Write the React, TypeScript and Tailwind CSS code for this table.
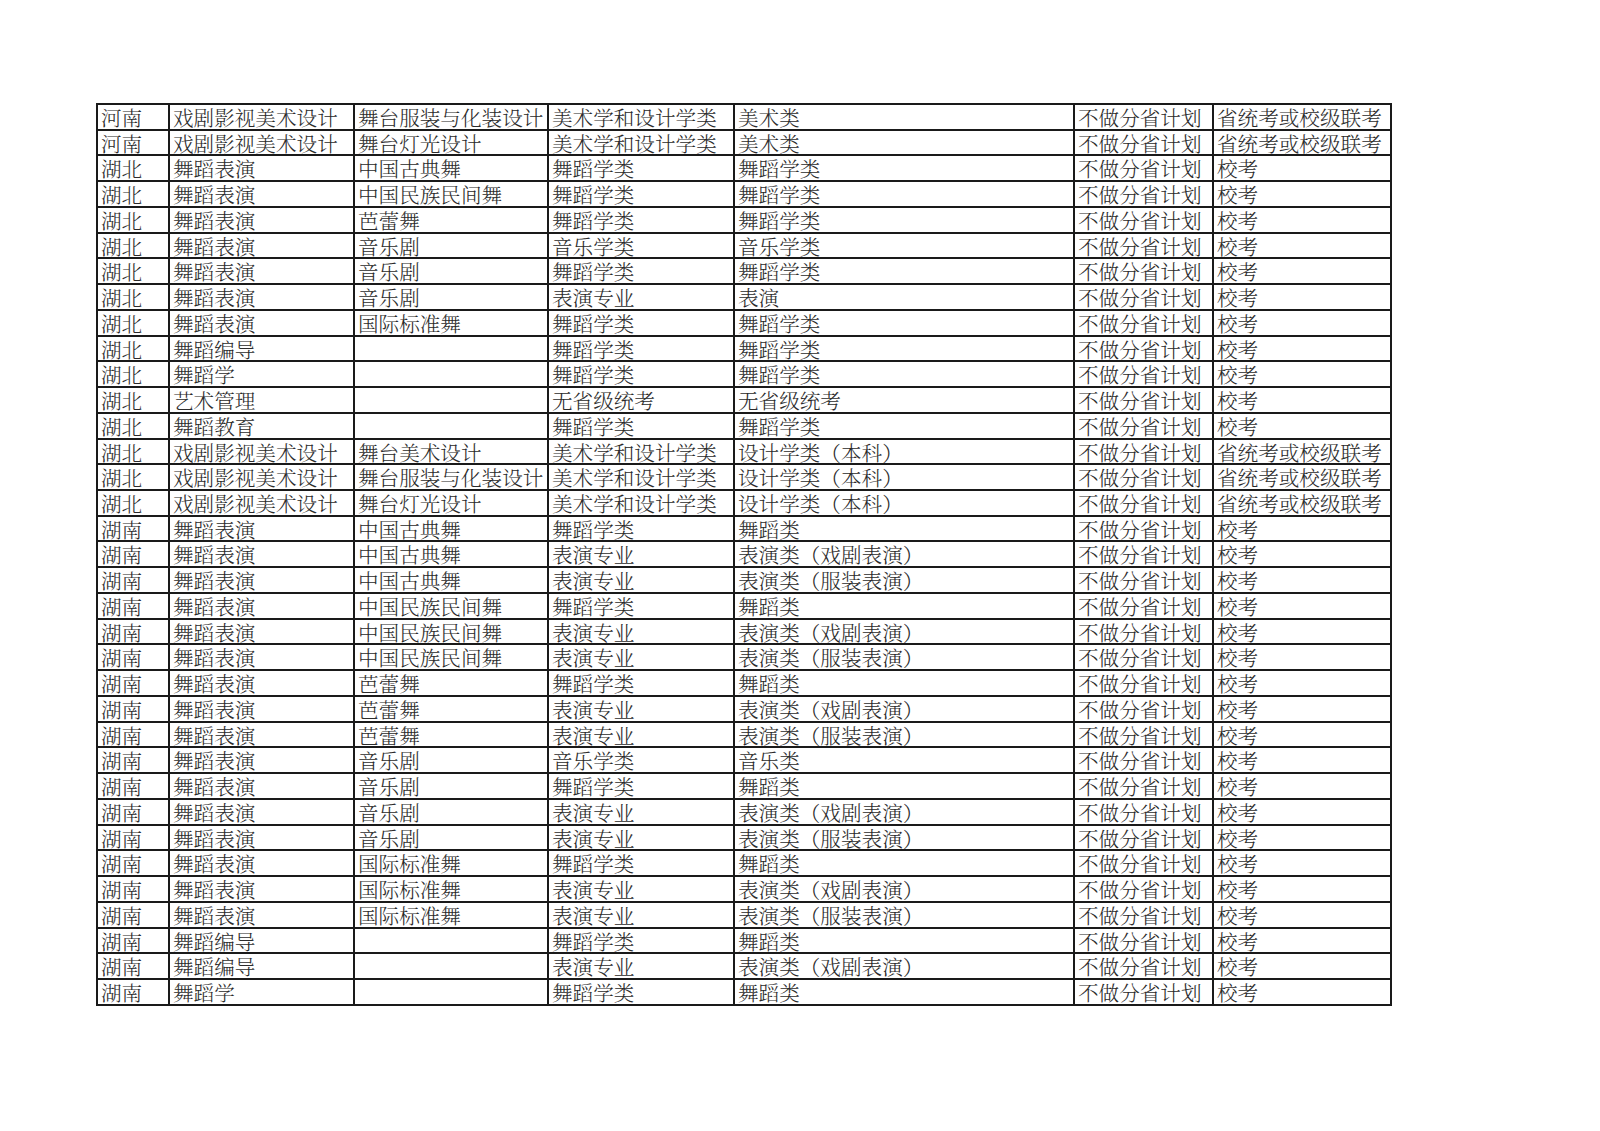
import React from "react";

const P = "不做分省计划";
const rows: string[][] = [
  ["河南", "戏剧影视美术设计", "舞台服装与化装设计", "美术学和设计学类", "美术类", P, "省统考或校级联考"],
  ["河南", "戏剧影视美术设计", "舞台灯光设计", "美术学和设计学类", "美术类", P, "省统考或校级联考"],
  ["湖北", "舞蹈表演", "中国古典舞", "舞蹈学类", "舞蹈学类", P, "校考"],
  ["湖北", "舞蹈表演", "中国民族民间舞", "舞蹈学类", "舞蹈学类", P, "校考"],
  ["湖北", "舞蹈表演", "芭蕾舞", "舞蹈学类", "舞蹈学类", P, "校考"],
  ["湖北", "舞蹈表演", "音乐剧", "音乐学类", "音乐学类", P, "校考"],
  ["湖北", "舞蹈表演", "音乐剧", "舞蹈学类", "舞蹈学类", P, "校考"],
  ["湖北", "舞蹈表演", "音乐剧", "表演专业", "表演", P, "校考"],
  ["湖北", "舞蹈表演", "国际标准舞", "舞蹈学类", "舞蹈学类", P, "校考"],
  ["湖北", "舞蹈编导", "", "舞蹈学类", "舞蹈学类", P, "校考"],
  ["湖北", "舞蹈学", "", "舞蹈学类", "舞蹈学类", P, "校考"],
  ["湖北", "艺术管理", "", "无省级统考", "无省级统考", P, "校考"],
  ["湖北", "舞蹈教育", "", "舞蹈学类", "舞蹈学类", P, "校考"],
  ["湖北", "戏剧影视美术设计", "舞台美术设计", "美术学和设计学类", "设计学类（本科）", P, "省统考或校级联考"],
  ["湖北", "戏剧影视美术设计", "舞台服装与化装设计", "美术学和设计学类", "设计学类（本科）", P, "省统考或校级联考"],
  ["湖北", "戏剧影视美术设计", "舞台灯光设计", "美术学和设计学类", "设计学类（本科）", P, "省统考或校级联考"],
  ["湖南", "舞蹈表演", "中国古典舞", "舞蹈学类", "舞蹈类", P, "校考"],
  ["湖南", "舞蹈表演", "中国古典舞", "表演专业", "表演类（戏剧表演）", P, "校考"],
  ["湖南", "舞蹈表演", "中国古典舞", "表演专业", "表演类（服装表演）", P, "校考"],
  ["湖南", "舞蹈表演", "中国民族民间舞", "舞蹈学类", "舞蹈类", P, "校考"],
  ["湖南", "舞蹈表演", "中国民族民间舞", "表演专业", "表演类（戏剧表演）", P, "校考"],
  ["湖南", "舞蹈表演", "中国民族民间舞", "表演专业", "表演类（服装表演）", P, "校考"],
  ["湖南", "舞蹈表演", "芭蕾舞", "舞蹈学类", "舞蹈类", P, "校考"],
  ["湖南", "舞蹈表演", "芭蕾舞", "表演专业", "表演类（戏剧表演）", P, "校考"],
  ["湖南", "舞蹈表演", "芭蕾舞", "表演专业", "表演类（服装表演）", P, "校考"],
  ["湖南", "舞蹈表演", "音乐剧", "音乐学类", "音乐类", P, "校考"],
  ["湖南", "舞蹈表演", "音乐剧", "舞蹈学类", "舞蹈类", P, "校考"],
  ["湖南", "舞蹈表演", "音乐剧", "表演专业", "表演类（戏剧表演）", P, "校考"],
  ["湖南", "舞蹈表演", "音乐剧", "表演专业", "表演类（服装表演）", P, "校考"],
  ["湖南", "舞蹈表演", "国际标准舞", "舞蹈学类", "舞蹈类", P, "校考"],
  ["湖南", "舞蹈表演", "国际标准舞", "表演专业", "表演类（戏剧表演）", P, "校考"],
  ["湖南", "舞蹈表演", "国际标准舞", "表演专业", "表演类（服装表演）", P, "校考"],
  ["湖南", "舞蹈编导", "", "舞蹈学类", "舞蹈类", P, "校考"],
  ["湖南", "舞蹈编导", "", "表演专业", "表演类（戏剧表演）", P, "校考"],
  ["湖南", "舞蹈学", "", "舞蹈学类", "舞蹈类", P, "校考"],
];

export default function App() {
  return (
    <div
      className="w-[1600px] h-[1131px] bg-white pt-[103px] pl-[96px]"
      style={{ fontFamily: '"Noto Serif CJK SC", "Noto Sans CJK SC", serif' }}
    >
      <div className="grid grid-cols-[72px_185px_194px_186px_340px_139px_178px] w-max border-t-2 border-l-2 border-[#1a1a1a]">
        {rows.map((r, i) =>
          r.map((c, j) => (
            <div
              key={`${i}-${j}`}
              className="h-[25.74px] border-r-2 border-b-2 border-[#1a1a1a] pl-[3px] pt-[1px] text-[20.6px] leading-[22.7px] text-[#2b2b2b] whitespace-nowrap font-light"
            >
              {c}
            </div>
          ))
        )}
      </div>
    </div>
  );
}
